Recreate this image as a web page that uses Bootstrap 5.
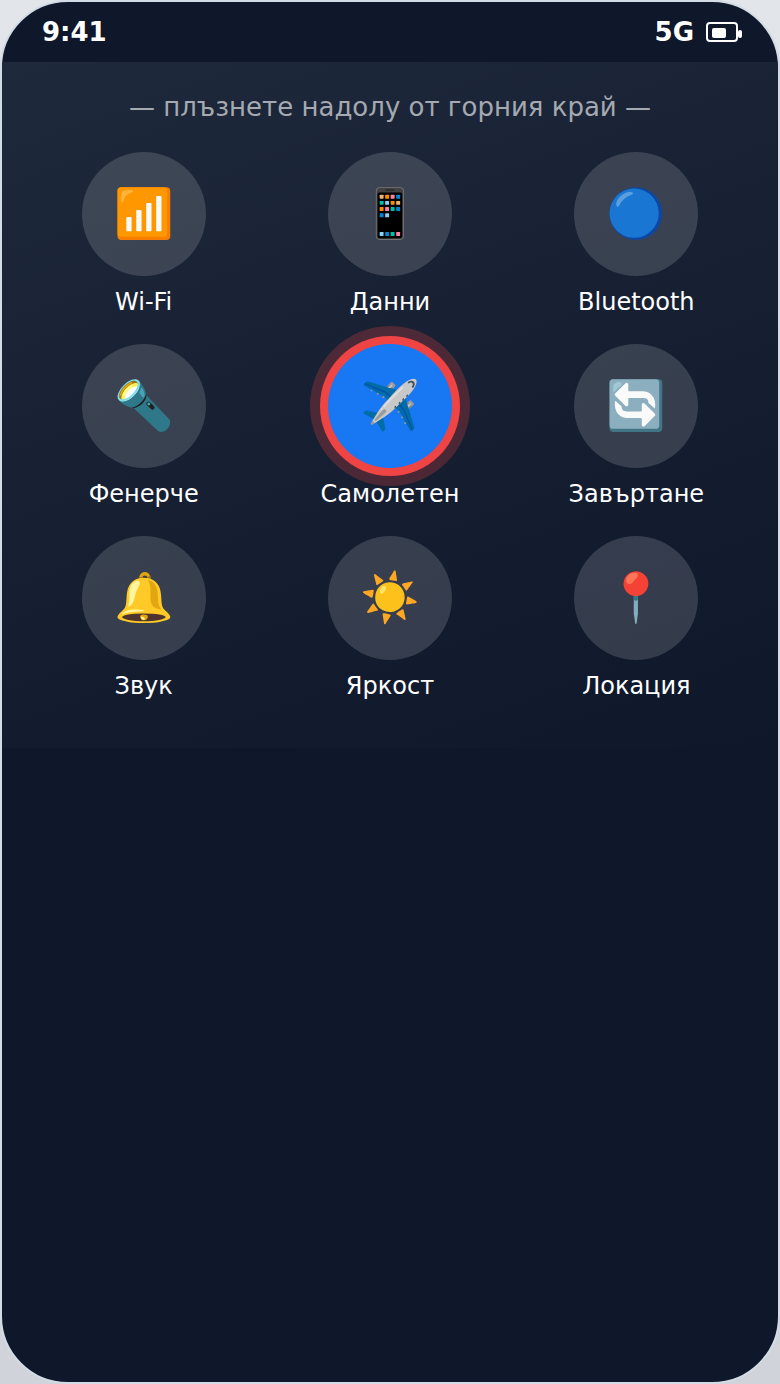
<!DOCTYPE html>
<html lang="bg">
<head>
<meta charset="utf-8">
<meta name="viewport" content="width=device-width, initial-scale=1">
<title>Бързи настройки</title>
<link href="https://cdn.jsdelivr.net/npm/bootstrap@5.3.0/dist/css/bootstrap.min.css" rel="stylesheet">
<style>
body { font-family: "DejaVu Sans", sans-serif; background: linear-gradient(#e2e5e9, #d0d4da); color: #fff; }
.phone { background: #0f172a; border: 2px solid #d3dce4; border-radius: 68px; }
.status { height: 60px; padding: 0 36px 0 40px; font-size: 26px; }
.panel { background: linear-gradient(160deg, #1e293b, #0f172a); padding: 24px 24px 48px; }
.hint { font-size: 26px; line-height: 42px; color: #a5a9b1; margin-bottom: 24px; }
.tiles { grid-template-columns: repeat(3, minmax(0, 1fr)); gap: 28px 11px; }
.tile { color: #fff; font-size: 24px; line-height: 28px; }
.tile:hover { color: #fff; }
.disc { width: 124px; height: 124px; padding-bottom: 2px; border-radius: 50%; background: rgba(255,255,255,.15); font-size: 48px; line-height: 56px; margin-bottom: 12px; }
.disc-on { background: #1877f2; box-shadow: 0 0 0 8px #ef4444, 0 0 0 18px rgba(239,68,68,.25); }
</style>
</head>
<body class="min-vh-100 d-flex">
<main class="phone flex-grow-1 overflow-hidden">
  <header class="status d-flex align-items-center justify-content-between fw-bold">
    <span>9:41</span>
    <span class="d-flex align-items-center gap-2"><span>5G</span>
      <svg width="40" height="22" viewBox="0 0 40 22" aria-hidden="true"><rect x="5" y="2" width="30" height="18" rx="3" fill="none" stroke="#fff" stroke-width="2"/><rect x="10" y="7" width="14" height="10" rx="2" fill="#fff"/><rect x="36" y="9" width="4" height="8" rx="2" fill="#fff"/></svg></span>
  </header>
  <section class="panel">
    <p class="hint text-center">— плъзнете надолу от горния край —</p>
    <div class="tiles d-grid">
      <button type="button" class="tile btn p-0 border-0 d-flex flex-column align-items-center"><span class="disc d-flex align-items-center justify-content-center">📶</span>Wi-Fi</button>
      <button type="button" class="tile btn p-0 border-0 d-flex flex-column align-items-center"><span class="disc d-flex align-items-center justify-content-center">📱</span>Данни</button>
      <button type="button" class="tile btn p-0 border-0 d-flex flex-column align-items-center"><span class="disc d-flex align-items-center justify-content-center">🔵</span>Bluetooth</button>
      <button type="button" class="tile btn p-0 border-0 d-flex flex-column align-items-center"><span class="disc d-flex align-items-center justify-content-center">🔦</span>Фенерче</button>
      <button type="button" class="tile btn p-0 border-0 d-flex flex-column align-items-center" aria-pressed="true"><span class="disc disc-on d-flex align-items-center justify-content-center">✈️</span>Самолетен</button>
      <button type="button" class="tile btn p-0 border-0 d-flex flex-column align-items-center"><span class="disc d-flex align-items-center justify-content-center">🔄</span>Завъртане</button>
      <button type="button" class="tile btn p-0 border-0 d-flex flex-column align-items-center"><span class="disc d-flex align-items-center justify-content-center">🔔</span>Звук</button>
      <button type="button" class="tile btn p-0 border-0 d-flex flex-column align-items-center"><span class="disc d-flex align-items-center justify-content-center">☀️</span>Яркост</button>
      <button type="button" class="tile btn p-0 border-0 d-flex flex-column align-items-center"><span class="disc d-flex align-items-center justify-content-center">📍</span>Локация</button>
    </div>
  </section>
</main>
<script src="https://cdn.jsdelivr.net/npm/bootstrap@5.3.0/dist/js/bootstrap.bundle.min.js"></script>
</body>
</html>
